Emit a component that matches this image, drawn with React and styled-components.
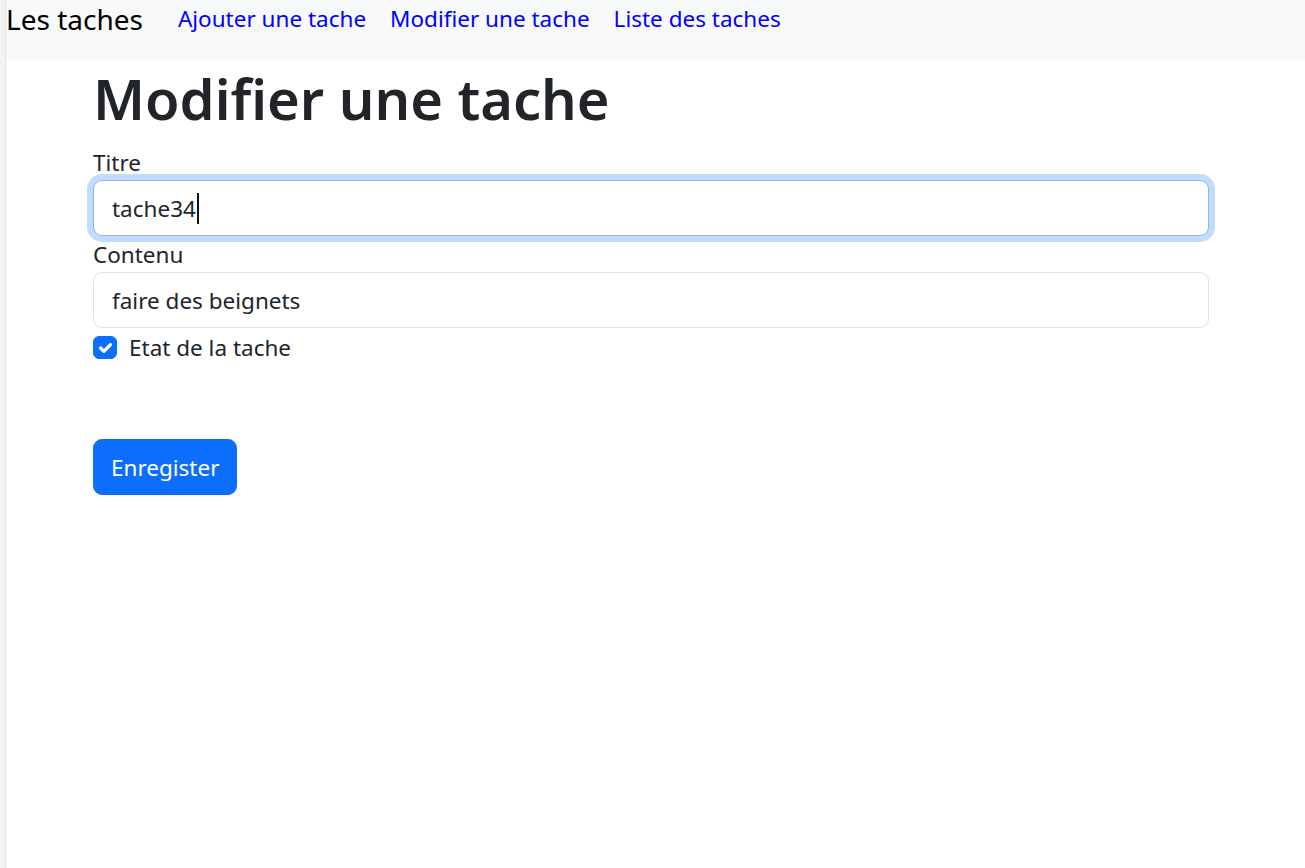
import React, { useState } from 'react'
import styled, { createGlobalStyle } from 'styled-components'

const GlobalStyle = createGlobalStyle`
    html, body {
        margin: 0;
        padding: 0;
        background: #ffffff;
    }
    body {
        font-family: "Noto Sans", "Open Sans", sans-serif;
        color: #212529;
    }
    * {
        box-sizing: border-box;
    }
`;

const Shell = styled.div`
    display: flex;
    min-height: 868px;
`;

const WindowEdge = styled.div`
    width: 6px;
    flex-shrink: 0;
    background: #f3f3f3;
    border-right: 1px solid #e4e4e4;
`;

const Page = styled.div`
    flex: 1;
    display: flex;
    flex-direction: column;
`;

const NavBar = styled.nav`
    height: 60px;
    background: #f8f9fa;
    display: flex;
    align-items: flex-start;
    padding-top: 1px;
`;

const Brand = styled.a`
    font-size: 28px;
    line-height: 36px;
    color: #000000;
    text-decoration: none;
    margin-right: 23px;
    white-space: nowrap;
`;

const NavLinks = styled.ul`
    display: flex;
    list-style: none;
    margin: 0;
    padding: 0;
`;

const NavLink = styled.a`
    display: block;
    font-size: 22.5px;
    line-height: 36px;
    padding: 0 12px;
    color: #0000ff;
    text-decoration: none;
    white-space: nowrap;
`;

const Container = styled.main`
    width: 1116px;
    margin-left: 87px;
`;

const Title = styled.h1`
    margin: 0 0 8px;
    font-size: 56px;
    line-height: 76px;
    font-weight: 600;
    color: #212529;
`;

const Form = styled.form`
    display: flex;
    flex-direction: column;
`;

const Label = styled.label`
    display: block;
    font-size: 22.5px;
    line-height: 34px;
    padding-top: 2px;
    height: 36px;
`;

const FieldWrap = styled.div`
    position: relative;
`;

const TextInput = styled.input`
    display: block;
    width: 100%;
    height: 56px;
    padding: 0 18px;
    font-family: inherit;
    font-size: 22.5px;
    color: #212529;
    background: #ffffff;
    border: 1px solid ${({ $focused }) => ($focused ? '#86b7fe' : '#dee2e6')};
    border-radius: 9px;
    outline: none;
    caret-color: transparent;
    box-shadow: ${({ $focused }) => ($focused ? '0 0 0 6px #c2dbfe' : 'none')};
`;

const CaretLayer = styled.div`
    position: absolute;
    inset: 0;
    padding: 0 19px;
    display: flex;
    align-items: center;
    pointer-events: none;
    font-size: 22.5px;
    color: transparent;
    white-space: pre;
`;

const Caret = styled.span`
    display: inline-block;
    width: 2px;
    height: 31px;
    margin-left: 1px;
    background: #111111;
`;

const CheckRow = styled.div`
    display: flex;
    align-items: flex-start;
    margin-top: 2px;
    min-height: 36px;
`;

const HiddenCheck = styled.input`
    position: absolute;
    opacity: 0;
    width: 0;
    height: 0;
`;

const CheckBox = styled.span`
    width: 24px;
    height: 23px;
    margin-top: 6px;
    border-radius: 6px;
    background: ${({ $checked }) => ($checked ? '#0d6efd' : '#ffffff')};
    border: 1px solid ${({ $checked }) => ($checked ? '#0d6efd' : '#dee2e6')};
    display: flex;
    align-items: center;
    justify-content: center;
    flex-shrink: 0;
    cursor: pointer;
`;

const CheckLabel = styled.label`
    display: flex;
    align-items: flex-start;
    gap: 12px;
    font-size: 22.5px;
    line-height: 36px;
    cursor: pointer;
`;

const SubmitButton = styled.button`
    align-self: flex-start;
    margin-top: 73px;
    height: 56px;
    padding: 0 17px;
    font-family: inherit;
    font-size: 22.5px;
    color: #ffffff;
    background: #0d6efd;
    border: 1px solid #0d6efd;
    border-radius: 9px;
    cursor: pointer;
`;

function App() {
    const [titre, setTitre] = useState('tache34')
    const [contenu, setContenu] = useState('faire des beignets')
    const [etat, setEtat] = useState(true)

    return (
        <Shell>
            <GlobalStyle />
            <WindowEdge />
            <Page>
                <NavBar>
                    <Brand href="#">Les taches</Brand>
                    <NavLinks>
                        <li><NavLink href="#">Ajouter une tache</NavLink></li>
                        <li><NavLink href="#">Modifier une tache</NavLink></li>
                        <li><NavLink href="#">Liste des taches</NavLink></li>
                    </NavLinks>
                </NavBar>
                <Container>
                    <Title>Modifier une tache</Title>
                    <Form onSubmit={(e) => e.preventDefault()}>
                        <Label htmlFor="titre">Titre</Label>
                        <FieldWrap>
                            <TextInput
                                id="titre"
                                $focused
                                value={titre}
                                onChange={(e) => setTitre(e.target.value)}
                            />
                            <CaretLayer>
                                {titre}
                                <Caret />
                            </CaretLayer>
                        </FieldWrap>
                        <Label htmlFor="contenu">Contenu</Label>
                        <TextInput
                            id="contenu"
                            value={contenu}
                            onChange={(e) => setContenu(e.target.value)}
                        />
                        <CheckRow>
                            <CheckLabel>
                                <HiddenCheck
                                    type="checkbox"
                                    checked={etat}
                                    onChange={(e) => setEtat(e.target.checked)}
                                />
                                <CheckBox $checked={etat}>
                                    {etat && (
                                        <svg width="22" height="22" viewBox="0 0 20 20">
                                            <path d="m6 10 3 3 6-6" fill="none" stroke="#fff" strokeWidth="3" strokeLinecap="round" strokeLinejoin="round" />
                                        </svg>
                                    )}
                                </CheckBox>
                                Etat de la tache
                            </CheckLabel>
                        </CheckRow>
                        <SubmitButton type="submit">Enregister</SubmitButton>
                    </Form>
                </Container>
            </Page>
        </Shell>
    )
}

export default App
